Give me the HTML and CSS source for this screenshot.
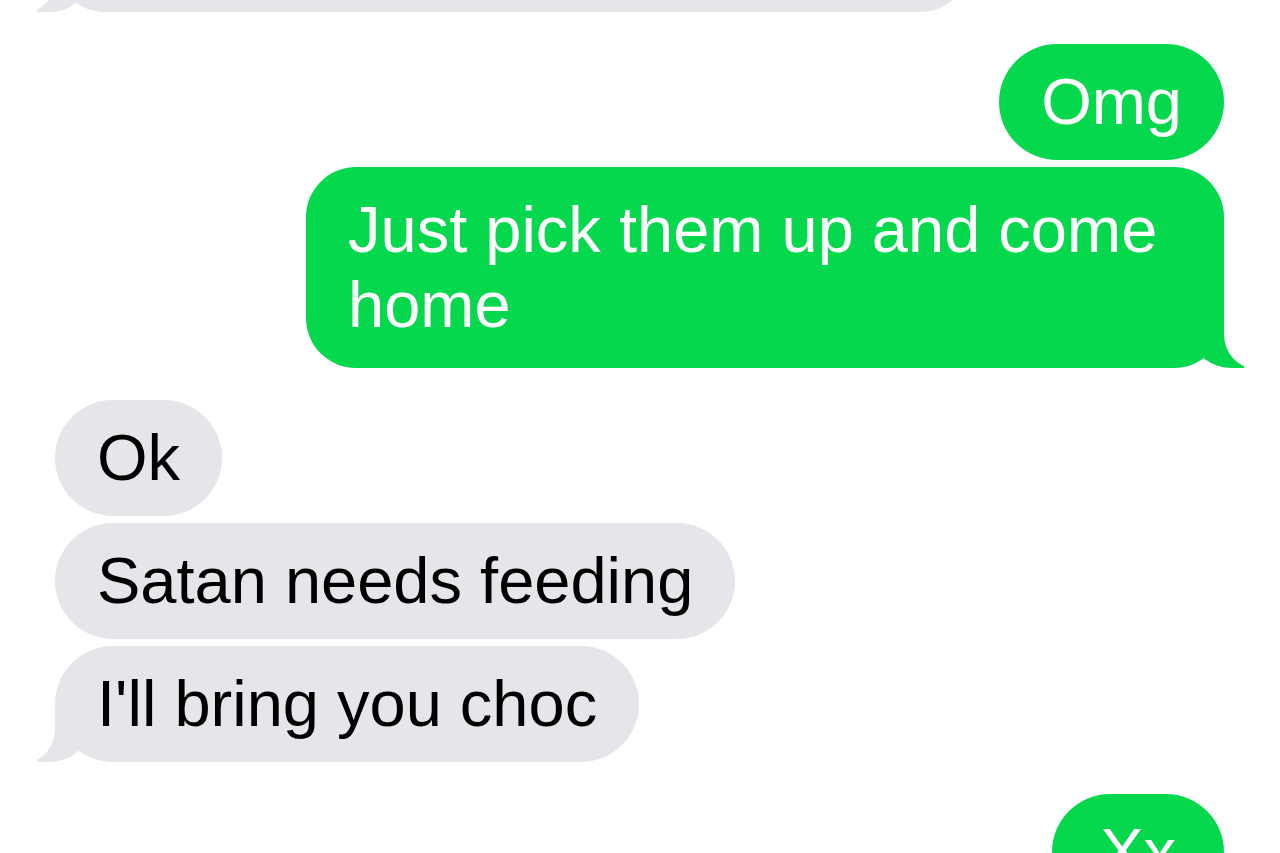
FILE: index.html
```html
<!DOCTYPE html>
<html lang="en">
<head>
    <meta charset="UTF-8">
    <meta name="viewport" content="width=device-width, initial-scale=1.0">
    <title>Messages</title>
    <link rel="stylesheet" href="styles.css">
</head>
<body>

    <!-- Conversation thread -->
    <div class="thread">

        <!-- Previous message, scrolled mostly out of view -->
        <div class="group">
            <div class="msg received tail cut-off"></div>
        </div>

        <div class="group">
            <div class="msg sent">Omg</div>
            <div class="msg sent tail multi">Just pick them up and come home</div>
        </div>

        <div class="group">
            <div class="msg received">Ok</div>
            <div class="msg received">Satan needs feeding</div>
            <div class="msg received tail">I'll bring you choc</div>
        </div>

        <div class="group">
            <div class="msg sent short">Xx</div>
        </div>

    </div>

</body>
</html>
```

FILE: styles.css
```css
/* Page */
body {
    margin: 0;
    background-color: #fff;
    font-family: "Liberation Sans", Arial, sans-serif;
    overflow: hidden;
}

/* Thread */
.thread {
    display: flex;
    flex-direction: column;
    gap: 32px;
    padding: 0 56px 0 55px;
}

.group {
    display: flex;
    flex-direction: column;
    gap: 7px;
}

/* Bubbles */
.msg {
    position: relative;
    max-width: 834px;
    padding: 20px 42px 21px;
    border-radius: 58px;
    font-size: 65px;
    line-height: 75px;
}

.msg.multi {
    padding-top: 25px;
    padding-bottom: 26px;
    border-radius: 50px;
}

.msg.short {
    padding: 20px 48px 21px;
}

.sent {
    align-self: flex-end;
    background-color: #06d84e;
    color: #fff;
}

.received {
    align-self: flex-start;
    background-color: #e5e5ea;
    color: #000;
}

/* Top bubble that is mostly scrolled away */
.msg.cut-off {
    width: 831px;
    height: 120px;
    margin-top: -149px;
    border-radius: 50px;
}

/* Tails on the last bubble of a group */
.tail::before,
.tail::after {
    content: "";
    position: absolute;
    bottom: 0;
    height: 60px;
}

.sent.tail::before {
    right: -20px;
    width: 50px;
    background-color: #06d84e;
    border-bottom-left-radius: 38px 30px;
}

.sent.tail::after {
    right: -70px;
    width: 70px;
    background-color: #fff;
    border-bottom-left-radius: 30px 34px;
}

.received.tail::before {
    left: -18px;
    width: 50px;
    background-color: #e5e5ea;
    border-bottom-right-radius: 38px 30px;
}

.received.tail::after {
    left: -70px;
    width: 70px;
    background-color: #fff;
    border-bottom-right-radius: 28px 34px;
}
```
